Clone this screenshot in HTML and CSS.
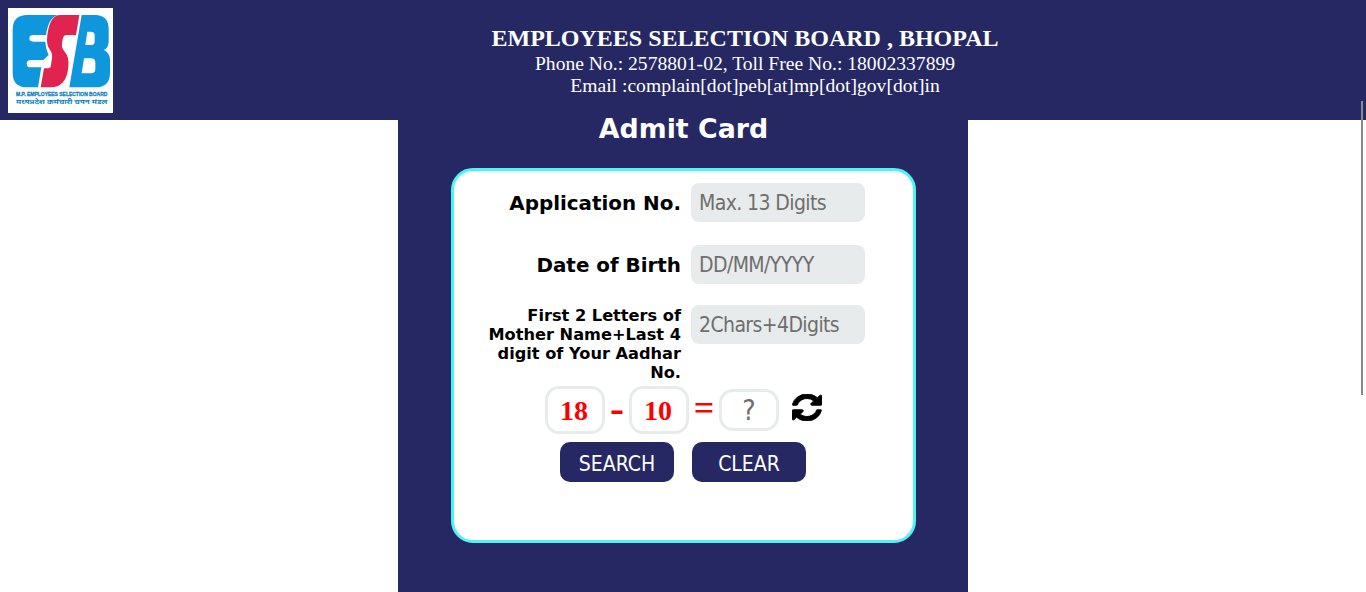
FILE: index.html
```html
<!DOCTYPE html>
<html lang="en">
<head>
<meta charset="utf-8">
<title>Admit Card</title>
<link rel="stylesheet" href="styles.css">
</head>
<body>
<header class="site-header">
  <div class="logo">
    <svg class="logo-mark" viewBox="24 24 315 315" width="105" height="105" role="img" aria-label="ESB logo">
      <path class="blue" d="M82 45H172Q145 55 138 105H100Q88 105 88 115Q88 125 100 125H136Q138 150 146 165L130 180H92Q80 180 80 191Q80 202 92 202H124L114 262H82Q38 262 38 218V89Q38 45 82 45Z"/>
      <path class="red" d="M180 45H238L228 105H200Q190 105 188 118L186 130Q184 145 194 155Q208 170 205 200Q200 262 150 262H122L132 205H145Q152 205 153 195L156 175Q158 160 150 150Q138 135 142 105Q150 45 180 45Z"/>
      <path class="blue" fill-rule="evenodd" d="M245 45H285Q326 45 326 88V125Q326 142 312 150Q330 160 330 180V218Q330 262 286 262H208ZM262 95L256 135H272Q284 135 284 125V105Q284 95 272 95ZM252 175L245 220H272Q286 220 286 208V188Q286 175 272 175Z"/>
      <text class="logo-en" x="185" y="287" text-anchor="middle" textLength="274" lengthAdjust="spacingAndGlyphs">M.P. EMPLOYEES SELECTION BOARD</text>
      <text class="logo-hi" x="185" y="312" text-anchor="middle" textLength="274" lengthAdjust="spacingAndGlyphs">मध्यप्रदेश कर्मचारी चयन मंडल</text>
    </svg>
  </div>
  <div class="org">
    <div class="org-name">EMPLOYEES SELECTION BOARD , BHOPAL</div>
    <div class="org-line">Phone No.: 2578801-02, Toll Free No.: 18002337899</div>
    <div class="org-line org-mail">Email :complain[dot]peb[at]mp[dot]gov[dot]in</div>
  </div>
</header>

<main class="panel">
  <h1 class="panel-title">Admit Card</h1>
  <form class="card">
    <div class="field">
      <label class="label" for="app">Application No.</label>
      <input class="input" id="app" type="text" placeholder="Max. 13 Digits">
    </div>
    <div class="field field-two">
      <label class="label" for="dob">Date of Birth</label>
      <input class="input" id="dob" type="text" placeholder="DD/MM/YYYY">
    </div>
    <div class="field field-three">
      <label class="label label-small" for="mother">First 2 Letters of Mother Name+Last 4 digit of Your Aadhar No.</label>
      <input class="input" id="mother" type="text" placeholder="2Chars+4Digits">
    </div>
    <div class="captcha">
      <span class="cap-box">18</span>
      <span class="cap-op cap-minus">-</span>
      <span class="cap-box">10</span>
      <span class="cap-op cap-eq">=</span>
      <input class="cap-answer" type="text" placeholder="?">
      <svg class="refresh" viewBox="0 0 1536 1536" width="30" height="27" preserveAspectRatio="none" aria-hidden="true">
        <path d="M1511 928q0 5-1 7-64 268-268 434.5t-478 166.5q-146 0-282.5-55t-243.5-157l-129 129q-19 19-45 19t-45-19-19-45v-448q0-26 19-45t45-19h448q26 0 45 19t19 45-19 45l-137 137q71 66 161 102t187 36q134 0 250-65t186-179q11-17 53-117 8-23 30-23h192q13 0 22.5 9.5t9.5 22.5zm25-800v448q0 26-19 45t-45 19h-448q-26 0-45-19t-19-45 19-45l138-138q-148-137-349-137-134 0-250 65t-186 179q-11 17-53 117-8 23-30 23h-199q-13 0-22.5-9.5t-9.5-22.5v-7q65-268 270-434.5t480-166.5q146 0 284 55.5t245 156.5l130-129q19-19 45-19t45 19 19 45z"/>
      </svg>
    </div>
    <div class="actions">
      <button class="btn" type="button">SEARCH</button>
      <button class="btn" type="button">CLEAR</button>
    </div>
  </form>
</main>
<div class="scroll-thumb"></div>
</body>
</html>
```

FILE: styles.css
```css
* { box-sizing: border-box; }
html, body { height: 592px; overflow: hidden; }
body { margin: 0; background: #fff; font-family: "DejaVu Sans", sans-serif; }

.site-header {
  height: 120px;
  background: #262863;
  display: flex;
  padding: 8px 0 0 8px;
  color: #fff;
}
.logo { width: 105px; height: 105px; background: #fff; flex: none; }
.logo-mark { display: block; }
.blue { fill: #0f97de; }
.red { fill: #e0244f; }
.logo-en { font: 700 15px "Liberation Sans", sans-serif; fill: #0c7fbd; stroke: #0c7fbd; stroke-width: 0.8; }
.logo-hi { font: 700 17px "Noto Sans", "DejaVu Sans", sans-serif; fill: #0c7fbd; }

.org {
  flex: 1;
  margin-left: 11px;
  padding-top: 16px;
  text-align: center;
  font-family: "Liberation Serif", serif;
}
.org-name { font-size: 24px; font-weight: 700; line-height: 28px; }
.org-line { font-size: 19.6px; line-height: 23px; }
.org-mail { padding-left: 20px; margin-top: -1px; }

.panel {
  width: 570px;
  height: 472px;
  margin: 0 auto;
  background: #262863;
  padding: 0 52px 0 53px;
}
.panel-title {
  margin: 0;
  height: 48px;
  text-align: center;
  color: #fff;
  font-size: 26.8px;
  font-weight: 700;
  line-height: 18px;
}
.card {
  width: 465px;
  height: 375px;
  background: #fff;
  border: 3px solid #4ef3f3;
  border-radius: 22px;
  padding-top: 12px;
}
.field { display: flex; align-items: flex-start; }
.field-two { margin-top: 21px; }
.field-three { margin-top: 19px; }
.label {
  width: 227px;
  text-align: right;
  margin-right: 10px;
  padding-left: 30px;
  color: #000;
  font-size: 19.9px;
  font-weight: 700;
  line-height: 41px;
  flex: none;
}
.label-small {
  font-size: 16.2px;
  line-height: 19px;
  padding-top: 1px;
  padding-left: 20px;
}
.input {
  width: 174px;
  height: 39px;
  flex: none;
  border: 0;
  border-radius: 8px;
  background: #e8ebec;
  padding: 0 8px;
  font: 21px "DejaVu Sans Condensed", sans-serif;
  letter-spacing: -0.6px;
  color: #333;
}
.input::placeholder, .cap-answer::placeholder { color: #6e6e6e; opacity: 1; }

.captcha {
  display: flex;
  align-items: center;
  margin-top: 4px;
  padding-left: 91px;
  height: 48px;
  font-family: "Liberation Serif", serif;
  font-weight: 700;
  color: #f00;
}
.cap-box {
  width: 60px;
  height: 48px;
  border: 3px solid #e8ebec;
  border-radius: 14px;
  font-size: 28px;
  line-height: 44px;
  text-align: center;
  padding-right: 2px;
  flex: none;
}
.cap-op { width: 24px; text-align: center; font-size: 36px; line-height: 48px; flex: none; }
.cap-minus { font-size: 42px; margin-top: -4px; }
.cap-eq { width: 30px; margin-top: -4px; }
.cap-answer {
  width: 60px;
  height: 42px;
  flex: none;
  border: 3px solid #e8ebec;
  border-radius: 14px;
  background: #fff;
  text-align: center;
  font: 28px "DejaVu Sans Condensed", sans-serif;
  padding: 0;
}
.refresh { margin: -6px 0 0 13px; flex: none; stroke: #000; stroke-width: 50; }

.actions {
  display: flex;
  gap: 18px;
  margin-top: 8px;
  padding-left: 106px;
}
.btn {
  width: 114px;
  height: 40px;
  border: 0;
  border-radius: 10px;
  background: #262863;
  color: #fff;
  font: 21px "DejaVu Sans Condensed", sans-serif;
  padding: 3px 0 0;
}

.scroll-thumb {
  position: fixed;
  top: 101px;
  left: 1361px;
  width: 2px;
  height: 294px;
  background: #8a8a8a;
}
```
